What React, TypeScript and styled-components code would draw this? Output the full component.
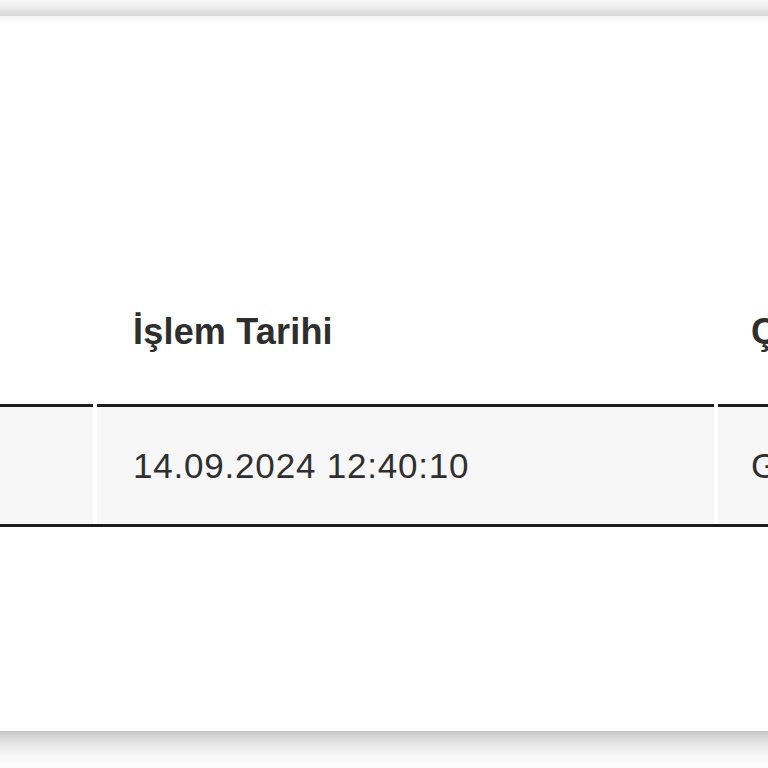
import React from "react";
import styled, { createGlobalStyle } from "styled-components";

const Global = createGlobalStyle`
  html, body { margin: 0; padding: 0; background: #ffffff; }
  body { font-family: "Liberation Sans", Arial, sans-serif; overflow: hidden; }
`;

const Page = styled.div`
  width: 768px;
  height: 768px;
  display: flex;
  flex-direction: column;
  overflow: hidden;
  background: #ffffff;
`;

const TopShade = styled.div`
  flex: 0 0 16px;
  background: linear-gradient(to bottom, #f8f8f8 0%, #ececec 45%, #dedede 80%, #d8d8d8 100%);
`;

const Card = styled.div`
  flex: 0 0 715px;
  background: linear-gradient(to bottom, #f4f4f4 0px, #ffffff 8px, #ffffff 100%);
  overflow: hidden;
`;

const BottomShade = styled.div`
  flex: 1 1 auto;
  background: linear-gradient(to bottom, #c4c4c4 0px, #d4d4d4 5px, #e8e8e8 14px, #f6f6f6 24px, #fdfdfd 34px);
`;

const Table = styled.div`
  display: grid;
  grid-template-columns: 93px 617px 200px;
  column-gap: 4px;
  width: 918px;
`;

const HeadCell = styled.div<{ $inset?: number }>`
  height: 388px;
  box-sizing: border-box;
  display: flex;
  align-items: flex-end;
  padding: 0 34px 52px ${(p) => p.$inset ?? 36}px;
  font-size: 36px;
  line-height: 40px;
  font-weight: 700;
  letter-spacing: 0.2px;
  color: #2e2e2e;
  white-space: nowrap;
`;

const BodyCell = styled.div<{ $inset?: number }>`
  background: #f7f7f7;
  border-top: 3px solid #1c1c1c;
  height: 120px;
  box-sizing: border-box;
  padding: 39px 34px 38px ${(p) => p.$inset ?? 36}px;
  font-size: 35px;
  line-height: 40px;
  font-weight: 400;
  letter-spacing: 0.8px;
  color: #2f2f2f;
  white-space: nowrap;
`;

const BottomRule = styled.div`
  grid-column: 1 / -1;
  height: 3px;
  background: #1c1c1c;
`;

export default function App() {
  return (
    <>
      <Global />
      <Page>
        <TopShade />
        <Card>
          <Table>
            <HeadCell />
            <HeadCell>İşlem Tarihi</HeadCell>
            <HeadCell $inset={33}>Çıkış</HeadCell>
            <BodyCell />
            <BodyCell>14.09.2024 12:40:10</BodyCell>
            <BodyCell $inset={33}>Gönderildi</BodyCell>
            <BottomRule />
          </Table>
        </Card>
        <BottomShade />
      </Page>
    </>
  );
}
